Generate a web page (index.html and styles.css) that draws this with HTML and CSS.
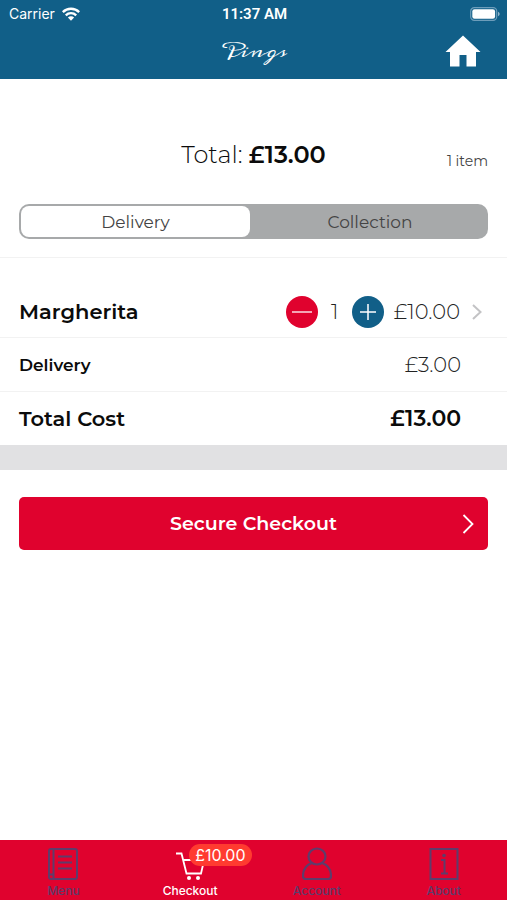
FILE: index.html
```html
<!DOCTYPE html>
<html lang="en">
<head>
<meta charset="utf-8">
<meta name="viewport" content="width=device-width, initial-scale=1">
<title>Pings – Checkout</title>
<link rel="stylesheet" href="styles.css">
</head>
<body>
<header class="header">
  <div class="status">
    <div class="carrier">Carrier
      <svg width="18" height="14" viewBox="0 0 18 14" aria-hidden="true"><g fill="none" stroke="#fff" stroke-width="2.4"><path d="M.8 5.1a11.6 11.6 0 0 1 16.4 0"/><path d="M3.8 8.3a7.4 7.4 0 0 1 10.4 0"/></g><path d="M5.9 10.5a4.4 4.4 0 0 1 6.2 0L9 13.7z" fill="#fff"/></svg>
    </div>
    <time class="clock">11:37 AM</time>
    <svg class="battery" width="30" height="14" viewBox="0 0 30 14" aria-hidden="true"><rect x=".7" y=".7" width="26" height="12.6" rx="3.6" fill="none" stroke="#6d9dba" stroke-width="1.2"/><rect x="2.3" y="2.3" width="22.8" height="9.4" rx="2.2" fill="#fff"/><path d="M28 4.8c2.2.8 2.2 3.6 0 4.4z" fill="#8fb5ca"/></svg>
  </div>
  <div class="titlebar">
    <h1 class="brand">Pings</h1>
    <a class="home" href="#home" aria-label="Home">
      <svg width="36" height="32" viewBox="0 0 36 32" aria-hidden="true"><path d="M18 .5 35.5 17H31v14.5h-9.5V20h-7v11.5H5V17H.5z" fill="#fff"/></svg>
    </a>
  </div>
</header>
<main class="main">
  <section class="summary">
    <span></span>
    <p class="total">Total: <b>£13.00</b></p>
    <p class="count">1 item</p>
  </section>
  <div class="segments" role="group" aria-label="Order type">
    <button class="segment selected" type="button" aria-pressed="true">Delivery</button>
    <button class="segment" type="button" aria-pressed="false">Collection</button>
  </div>
  <section class="lines">
    <div class="row item">
      <h2 class="name">Margherita</h2>
      <div class="stepper">
        <button class="round minus" type="button" aria-label="Remove one"><svg width="20" height="20" viewBox="0 0 20 20" aria-hidden="true"><path d="M0 10h20" stroke="#fff" stroke-width="1.3"/></svg></button>
        <span class="quantity">1</span>
        <button class="round plus" type="button" aria-label="Add one"><svg width="16" height="16" viewBox="0 0 16 16" aria-hidden="true"><path d="M0 8h16M8 0v16" stroke="#fff" stroke-width="1.5"/></svg></button>
      </div>
      <span class="price">£10.00</span>
      <svg class="chevron" width="10" height="16" viewBox="0 0 10 16" aria-hidden="true"><path d="m1 1 7.5 7L1 15" fill="none" stroke="#c3c3c5" stroke-width="2"/></svg>
    </div>
    <div class="row">
      <h2 class="name small">Delivery</h2>
      <span class="price">£3.00</span>
    </div>
    <div class="row">
      <h2 class="name">Total Cost</h2>
      <b class="price strong">£13.00</b>
    </div>
  </section>
  <button class="checkout" type="button">
    <span></span>
    <span>Secure Checkout</span>
    <svg width="12" height="20" viewBox="0 0 12 20" aria-hidden="true"><path d="m1.5 1 9 9-9 9" fill="none" stroke="#fff" stroke-width="1.8"/></svg>
  </button>
</main>
<nav class="tabs">
  <a class="tab" href="#menu">
    <svg width="30" height="34" viewBox="0 0 30 34" aria-hidden="true"><g fill="none" stroke="currentColor" stroke-width="2"><rect x="1" y="2" width="28" height="30" rx="2"/><path d="M5.500 2v30M1 27.500h4.500"/><path d="M10 9.500h14M10 15.500h14M10 21.500h14"/></g></svg>
    Menu
  </a>
  <a class="tab current" href="#checkout" aria-current="page">
    <svg width="30" height="34" viewBox="0 0 30 34" aria-hidden="true"><g fill="none" stroke="currentColor" stroke-width="1.8"><path d="M1 6.500h5.500l5 20h14.500l3-13M8.500 13h20.500"/></g><circle cx="14" cy="31" r="2" fill="currentColor"/><circle cx="23" cy="31" r="2" fill="currentColor"/></svg>
    Checkout
    <span class="badge">£10.00</span>
  </a>
  <a class="tab" href="#account">
    <svg width="30" height="34" viewBox="0 0 30 34" aria-hidden="true"><g fill="none" stroke="currentColor" stroke-width="2.2"><ellipse cx="15" cy="9.500" rx="8.500" ry="8"/><path d="M10 16C4 18 1 23 1 29q0 3 3 3h22q3 0 3-3c0-6-3-11-9-13"/></g></svg>
    Account
  </a>
  <a class="tab" href="#about">
    <svg width="30" height="34" viewBox="0 0 30 34" aria-hidden="true"><g fill="none" stroke="currentColor" stroke-width="2"><rect x="1.500" y="2" width="27" height="30"/><path d="M12 13h3.500v13M12 26.500h7"/></g><circle cx="15" cy="8.500" r="1.800" fill="currentColor"/></svg>
    About
  </a>
</nav>
</body>
</html>
```
FILE: styles.css
```css
* {
  box-sizing: border-box;
}

body {
  display: flex;
  flex-direction: column;
  min-height: 100vh;
  margin: 0;
  background: #fff;
  color: #0b0b0b;
  font-family: Montserrat, Inter, "Open Sans", sans-serif;
}

h1, h2, p {
  margin: 0;
}

button {
  padding: 0;
  border: 0;
  color: inherit;
  font: inherit;
}

a {
  color: inherit;
  text-decoration: none;
}

svg {
  display: block;
}

.header {
  height: 79px;
  background: #115f88;
  color: #fff;
}

.status,
.titlebar,
.summary,
.checkout {
  display: grid;
  grid-template-columns: 1fr auto 1fr;
  align-items: center;
}

.status {
  height: 27px;
  padding: 0 7px 0 9px;
  font-family: Inter, sans-serif;
  font-size: 14px;
}

.carrier {
  display: flex;
  align-items: center;
  gap: 7px;
}

.clock {
  font-family: Roboto, sans-serif;
  font-size: 15px;
  font-weight: 600;
}

.battery {
  justify-self: end;
}

.titlebar {
  height: 48px;
  padding: 0 26px;
}

.brand {
  grid-column: 2;
  font-family: Meddon, "Alex Brush", Lato, cursive;
  font-size: 18px;
  font-weight: 400;
  line-height: 32px;
}

.home {
  justify-self: end;
}

.main {
  flex: 1;
}

.summary {
  height: 125px;
  padding: 26px 19px 0;
}

.total {
  font-size: 24px;
  font-weight: 300;
}

.total b {
  font-weight: 600;
}

.count {
  justify-self: end;
  padding-top: 12px;
  color: #444;
  font-size: 14px;
  font-weight: 400;
}

.segments {
  display: grid;
  grid-template-columns: 229fr 232fr;
  gap: 4px;
  height: 35px;
  margin: 0 19px 18px;
  padding: 2px;
  border-radius: 10px;
  background: #a7a9aa;
}

.segment {
  border-radius: 8px;
  background: none;
  color: #444;
  font-size: 17px;
  font-weight: 400;
}

.selected {
  background: #fff;
}

.lines {
  border-bottom: 25px solid #e1e1e3;
}

.row {
  display: flex;
  align-items: center;
  height: 54px;
  padding: 0 46px 0 19px;
  border-top: 1px solid #f2f2f2;
}

.item {
  height: 80px;
  padding: 28px 25px 0 19px;
}

.name {
  flex: 1;
  font-size: 21px;
  font-weight: 600;
}

.small {
  font-size: 17px;
}

.stepper {
  display: flex;
  align-items: center;
}

.round {
  display: grid;
  place-items: center;
  width: 32px;
  height: 32px;
  border-radius: 50%;
}

.minus {
  background: #e0022e;
}

.plus {
  background: #115f88;
}

.quantity {
  width: 34px;
  color: #222;
  font-size: 21px;
  font-weight: 300;
  text-align: center;
}

.price {
  color: #222;
  font-size: 21px;
  font-weight: 300;
}

.item .price {
  margin: 0 12px 0 10px;
}

.strong {
  color: #0b0b0b;
  font-size: 22px;
  font-weight: 600;
}

.checkout {
  width: calc(100% - 38px);
  height: 53px;
  margin: 27px 19px;
  padding: 0 14px;
  border-radius: 5px;
  background: #e0022e;
  color: #fff;
  font-size: 19px;
  font-weight: 600;
}

.checkout svg {
  justify-self: end;
}

.tabs {
  display: grid;
  grid-template-columns: repeat(4, 1fr);
  height: 60px;
  background: #e0022e;
  color: #5f3c6b;
  font-family: Inter, sans-serif;
  font-size: 12px;
  font-weight: 500;
  line-height: 16px;
}

.tab {
  position: relative;
  display: flex;
  flex-direction: column;
  align-items: center;
  gap: 2px;
  padding-top: 7px;
}

.current {
  color: #fff;
}

.badge {
  position: absolute;
  top: 4px;
  left: 49%;
  width: 63px;
  height: 22px;
  border-radius: 11px;
  background: #ff3b30;
  font-size: 16px;
  font-weight: 400;
  line-height: 22px;
  text-align: center;
}
```
